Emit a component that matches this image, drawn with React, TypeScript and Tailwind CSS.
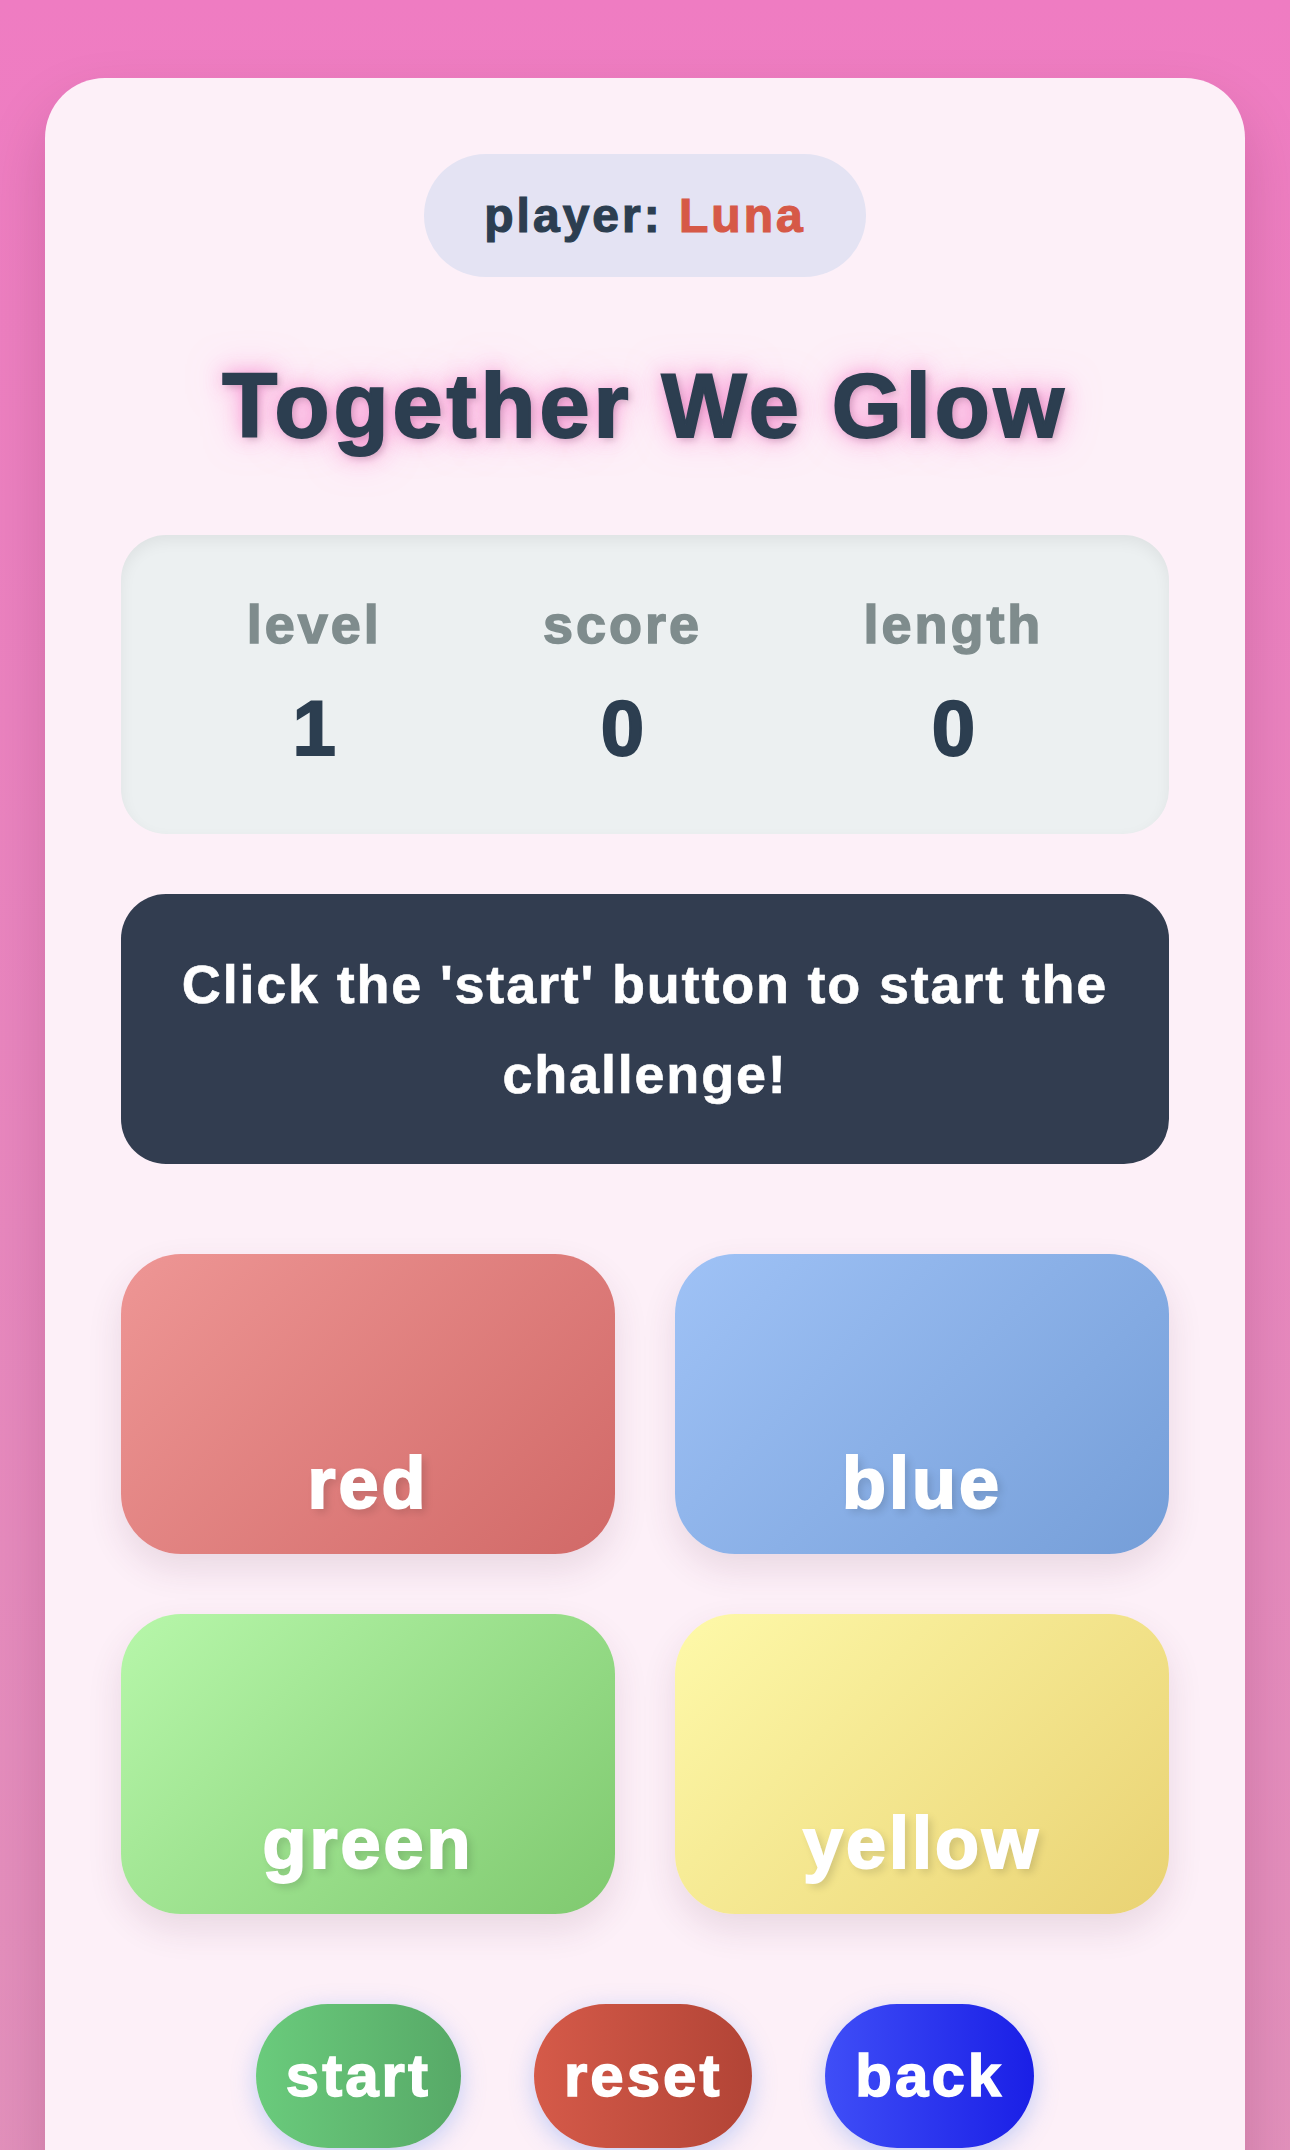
import React from 'react';

const stats = [
  { label: 'level', value: 1 },
  { label: 'score', value: 0 },
  { label: 'length', value: 0 },
];

const pads = [
  { name: 'red', cls: 'bg-[linear-gradient(135deg,#ee9695,#d16967)]' },
  { name: 'blue', cls: 'bg-[linear-gradient(135deg,#9fc2f6,#759ed8)]' },
  { name: 'green', cls: 'bg-[linear-gradient(135deg,#b7f7aa,#7fc96f)]' },
  { name: 'yellow', cls: 'bg-[linear-gradient(135deg,#fef9a9,#e9d273)]' },
];

const actions = [
  { name: 'start', cls: 'bg-[linear-gradient(90deg,#6acb7c,#57a967)]' },
  { name: 'reset', cls: 'bg-[linear-gradient(90deg,#d55a49,#b24436)]' },
  { name: 'back', cls: 'bg-[linear-gradient(90deg,#3f4ef7,#1a1fe6)]' },
];

export default function App() {
  return (
    <div className="min-h-screen bg-[linear-gradient(180deg,#ef7cc2,#e292bc)] px-[45px] pt-[78px] font-['Liberation_Sans',Arial,sans-serif]">
      <div className="rounded-[60px] bg-[#fdf0f8] px-[76px] pt-[76px] pb-[120px] shadow-[0_30px_60px_rgba(80,0,40,0.18)]">
        {/* player badge */}
        <div className="flex justify-center">
          <div className="flex h-[123px] items-center rounded-full bg-[#e4e3f3] px-[60px] text-[48px] font-bold tracking-[3px] text-[#2c3e50] [-webkit-text-stroke:1.2px_#2c3e50]">
            player:&nbsp;<span className="text-[#d65947] [-webkit-text-stroke:1.2px_#d65947]">Luna</span>
          </div>
        </div>

        <h1 className="mt-[84px] mb-[84px] text-center text-[90px] leading-none font-bold tracking-[4px] text-[#2c3e50] [-webkit-text-stroke:2px_#2c3e50] [text-shadow:3px_3px_6px_rgba(0,0,0,0.15),0_0_18px_rgba(245,120,200,0.7),0_0_36px_rgba(255,130,205,0.6)]">
          Together We Glow
        </h1>

        {/* stats */}
        <div className="flex h-[299px] items-start justify-around rounded-[45px] bg-[#ecf0f1] px-[45px] pt-[62px] shadow-[inset_0_6px_15px_rgba(0,0,0,0.06)]">
          {stats.map((s) => (
            <div key={s.label} className="flex flex-col items-center gap-[38px]">
              <span className="text-[54px] leading-none font-bold tracking-[3px] text-[#7f8c8d] [-webkit-text-stroke:1.5px_#7f8c8d]">
                {s.label}
              </span>
              <span className="text-[78px] leading-none font-bold text-[#2c3e50] [-webkit-text-stroke:2px_#2c3e50]">
                {s.value}
              </span>
            </div>
          ))}
        </div>

        {/* message */}
        <div className="mt-[60px] rounded-[45px] bg-[#323d50] px-[45px] py-[45px] text-center text-[54px] leading-[90px] font-bold tracking-[1.8px] text-white [-webkit-text-stroke:0.6px_#ffffff]">
          Click the 'start' button to start the challenge!
        </div>

        {/* colour pads */}
        <div className="mt-[90px] grid grid-cols-2 gap-[60px]">
          {pads.map((p) => (
            <div
              key={p.name}
              className={`flex h-[300px] items-end justify-center rounded-[60px] pb-[35px] shadow-[0_15px_35px_rgba(90,40,70,0.12)] ${p.cls}`}
            >
              <span className="text-[72px] leading-none font-bold tracking-[3px] text-white [-webkit-text-stroke:2px_#ffffff] [text-shadow:4px_4px_8px_rgba(0,0,0,0.15)]">
                {p.name}
              </span>
            </div>
          ))}
        </div>

        {/* controls */}
        <div className="mt-[90px] flex justify-center gap-[73px]">
          {actions.map((a) => (
            <button
              key={a.name}
              className={`flex h-[144px] items-center rounded-full px-[30px] text-[60px] leading-none font-bold tracking-[3px] text-white [-webkit-text-stroke:1.5px_#ffffff] shadow-[0_6px_24px_rgba(90,140,240,0.35)] ${a.cls}`}
            >
              {a.name}
            </button>
          ))}
        </div>
      </div>
    </div>
  );
}
